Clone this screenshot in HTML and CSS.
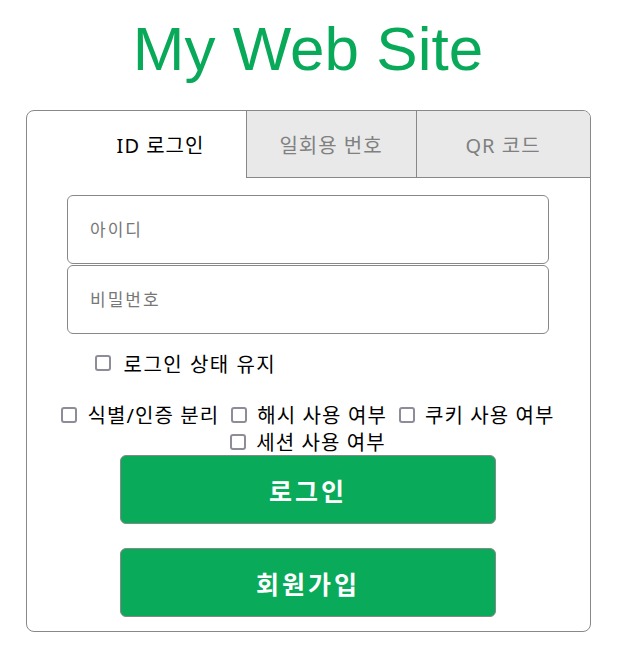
FILE: index.html
```html
<!DOCTYPE html>
<html lang="ko">
<head>
  <meta charset="UTF-8" />
  <meta name="viewport" content="width=device-width, initial-scale=1.0"/>
  <title>My Web Site</title>
  <link rel="stylesheet" href="styles.css">
</head>
<body>
  <div class="page">
    <h1 class="site-title">My Web Site</h1>

    <div class="login-box">
      <div class="tabs">
        <div class="tab active">ID 로그인</div>
        <div class="tab">일회용 번호</div>
        <div class="tab last">QR 코드</div>
      </div>

      <form class="login-form" onsubmit="return false;">
        <input type="text" class="field" placeholder="아이디" />
        <input type="password" class="field" placeholder="비밀번호" />

        <label class="keep-login">
          <input type="checkbox" class="check" />
          <span>로그인 상태 유지</span>
        </label>

        <div class="options">
          <label class="option"><input type="checkbox" class="check" /><span>식별/인증 분리</span></label>
          <label class="option"><input type="checkbox" class="check" /><span>해시 사용 여부</span></label>
          <label class="option"><input type="checkbox" class="check" /><span>쿠키 사용 여부</span></label>
          <label class="option"><input type="checkbox" class="check" /><span>세션 사용 여부</span></label>
        </div>

        <button type="submit" class="btn">로그인</button>
        <button type="button" class="btn">회원가입</button>
      </form>
    </div>
  </div>
</body>
</html>
```

FILE: styles.css
```css
html, body {
  margin: 0;
  padding: 0;
  background: white;
  font-family: 'Noto Sans', 'Noto Sans CJK KR', sans-serif;
}

.page {
  width: 616px;
}

.site-title {
  margin: 13px 0 25px;
  text-align: center;
  font-family: 'Liberation Sans', Arial, sans-serif;
  font-weight: normal;
  font-size: 62px;
  line-height: 72px;
  color: #09a95a;
}

.login-box {
  width: 563px;
  margin: 0 auto;
  border: 1px solid #888;
  border-radius: 8px;
  overflow: hidden;
}

.tabs {
  display: flex;
  padding-left: 49px;
  height: 67px;
}

.tab {
  width: 170px;
  display: flex;
  align-items: center;
  justify-content: center;
  font-size: 20px;
  letter-spacing: 1px;
  color: #808080;
  background: #e9e9e9;
  border-left: 1px solid #888;
  border-bottom: 1px solid #888;
  box-sizing: border-box;
}

.tab.active {
  background: white;
  color: black;
  border: none;
}

.tab.last {
  flex: 1;
}

.login-form {
  display: flex;
  flex-direction: column;
  align-items: center;
  padding: 17px 0 14px;
}

.field {
  width: 482px;
  height: 69px;
  box-sizing: border-box;
  margin: 0 0 1px;
  padding: 0 22px;
  border: 1px solid #888;
  border-radius: 6px;
  font-family: inherit;
  font-size: 17px;
  letter-spacing: 2px;
  outline: none;
}

.field::placeholder {
  color: #777;
}

.check {
  appearance: none;
  -webkit-appearance: none;
  width: 16px;
  height: 16px;
  margin: 0;
  border: 2px solid #8d8d99;
  border-radius: 3px;
  background: white;
  box-sizing: border-box;
  flex: none;
}

.keep-login {
  align-self: stretch;
  display: flex;
  align-items: center;
  gap: 13px;
  margin: 14px 0 0 68px;
  height: 28px;
  font-size: 20px;
  letter-spacing: 1.5px;
}

.options {
  width: 540px;
  display: flex;
  flex-wrap: wrap;
  justify-content: center;
  column-gap: 12px;
  margin-top: 24px;
}

.option {
  display: flex;
  align-items: center;
  gap: 10px;
  height: 27px;
  font-size: 20px;
  letter-spacing: 1.1px;
}

.btn {
  width: 376px;
  height: 69px;
  margin-top: 0;
  border: 1px solid #888;
  border-radius: 6px;
  background: #09aa5a;
  color: white;
  font-family: inherit;
  font-size: 25px;
  font-weight: bold;
  letter-spacing: 3px;
  cursor: pointer;
}

.btn + .btn {
  margin-top: 24px;
}
```
